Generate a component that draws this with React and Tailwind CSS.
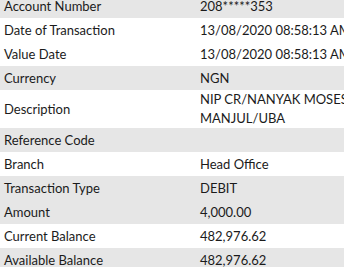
const ROWS = [
  { label: 'Account Number', value: '208*****353', shade: true },
  { label: 'Date of Transaction', value: '13/08/2020 08:58:13 AM' },
  { label: 'Value Date', value: '13/08/2020 08:58:13 AM' },
  { label: 'Currency', value: 'NGN', shade: true },
  { label: 'Description', value: 'NIP CR/NANYAK MOSES MANJUL/UBA', tall: true },
  { label: 'Reference Code', value: '', shade: true },
  { label: 'Branch', value: 'Head Office' },
  { label: 'Transaction Type', value: 'DEBIT', shade: true },
  { label: 'Amount', value: '4,000.00', shade: true },
  { label: 'Current Balance', value: '482,976.62' },
  { label: 'Available Balance', value: '482,976.62', shade: true },
];

export default function App() {
  return (
    <div className="h-[267px] w-[344px] overflow-hidden bg-white font-['Lato',sans-serif] text-[13px] text-[#1b1b1b]">
      <div className="-mt-[6px] w-[356px]">
        {ROWS.map((r) => (
          <div
            key={r.label}
            className={`flex items-center ${r.tall ? 'h-[38px]' : 'h-[24px]'} ${r.shade ? 'bg-[#e6e6e6]' : 'bg-white'}`}
          >
            <div className="w-[200px] shrink-0 pl-[4px] leading-[19px]">{r.label}</div>
            <div className={`w-[152px] shrink-0 leading-[19px] ${r.tall ? '' : 'whitespace-nowrap'}`}>
              {r.value}
            </div>
          </div>
        ))}
      </div>
    </div>
  );
}
